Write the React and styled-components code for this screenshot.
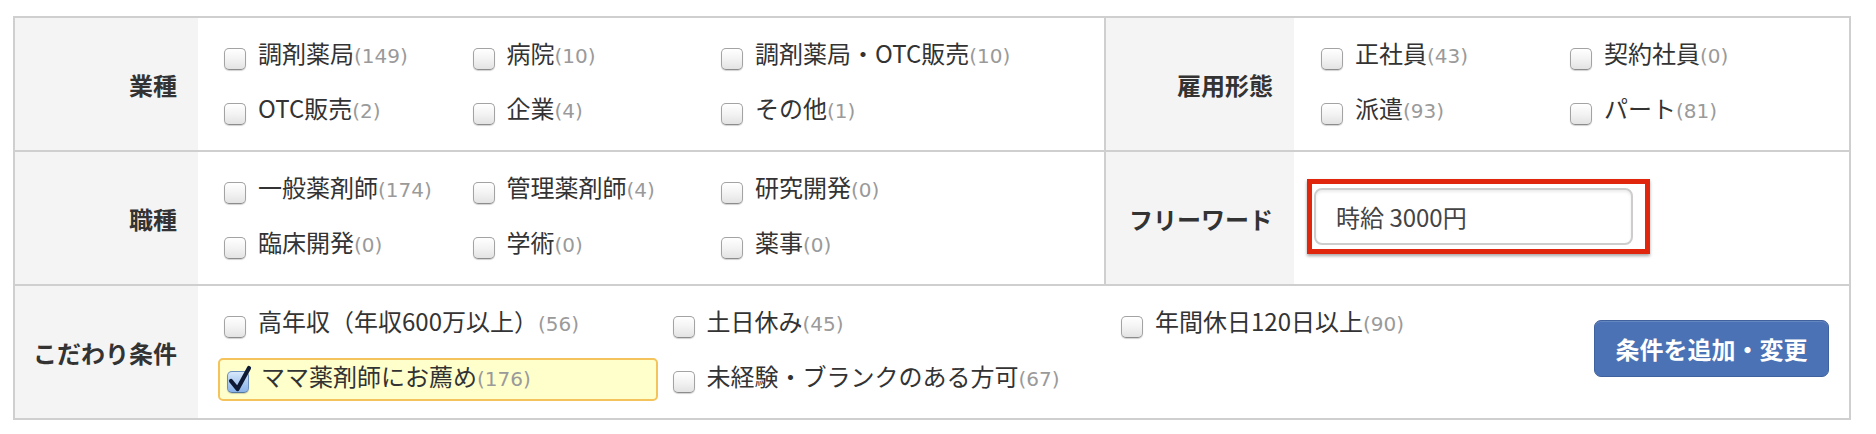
import React from "react";
import styled, { createGlobalStyle } from "styled-components";

const GlobalStyle = createGlobalStyle`
  body {
    margin: 0;
    background: #fff;
    color: #333;
    font-family: "Noto Sans CJK JP", "Liberation Sans", sans-serif;
  }
`;

const industry = [
  ["調剤薬局", 149],
  ["病院", 10],
  ["調剤薬局・OTC販売", 10],
  ["OTC販売", 2],
  ["企業", 4],
  ["その他", 1],
];

const employment = [
  ["正社員", 43],
  ["契約社員", 0],
  ["派遣", 93],
  ["パート", 81],
];

const jobs = [
  ["一般薬剤師", 174],
  ["管理薬剤師", 4],
  ["研究開発", 0],
  ["臨床開発", 0],
  ["学術", 0],
  ["薬事", 0],
];

const prefs = [
  ["高年収（年収600万以上）", 56],
  ["土日休み", 45],
  ["年間休日120日以上", 90],
  ["ママ薬剤師にお薦め", 176, true],
  ["未経験・ブランクのある方可", 67],
];

const Check = ({ label, count, checked }) => (
  <Option $on={checked}>
    <Box $on={checked}>
      {checked && (
        <Tick viewBox="0 0 24 28">
          <path d="M3 16 L9.5 24 L21 3" fill="none" stroke="#0e1a33" strokeWidth="4.2" strokeLinecap="round" strokeLinejoin="round" />
        </Tick>
      )}
    </Box>
    <Text>
      {label}
      <Count>({count})</Count>
    </Text>
  </Option>
);

const OptionGrid = ({ items, cols, colW }) => (
  <Options $cols={cols} $colW={colW}>
    {items.map(([label, count, checked]) => (
      <Check key={label} label={label} count={count} checked={checked} />
    ))}
  </Options>
);

export default function App() {
  return (
    <Page>
      <GlobalStyle />
      <Table>
        <Row>
          <Head $w={183}>業種</Head>
          <Cell $w={908} $divider $pl={26}>
            <OptionGrid items={industry} cols={3} colW={248.5} />
          </Cell>
          <Head $w={188}>雇用形態</Head>
          <Cell $grow $pl={27}>
            <OptionGrid items={employment} cols={2} colW={249} />
          </Cell>
        </Row>
        <Row>
          <Head $w={183}>職種</Head>
          <Cell $w={908} $divider $pl={26}>
            <OptionGrid items={jobs} cols={3} colW={248.5} />
          </Cell>
          <Head $w={188}>フリーワード</Head>
          <Cell $grow $pl={13} $center>
            <Marker>
              <Keyword defaultValue="時給 3000円" />
            </Marker>
          </Cell>
        </Row>
        <Row>
          <Head $w={183}>こだわり条件</Head>
          <Cell $grow $pl={26}>
            <OptionGrid items={prefs} cols={3} colW={448.5} />
            <Submit>条件を追加・変更</Submit>
          </Cell>
        </Row>
      </Table>
    </Page>
  );
}

const Page = styled.div`
  padding: 16px 0 0 13px;
`;

const Table = styled.div`
  width: 1838px;
  box-sizing: border-box;
  border: 2px solid #cfcfcf;
`;

const Row = styled.div`
  display: flex;
  height: 132px;
  & + & {
    border-top: 2px solid #cfcfcf;
  }
`;

const Head = styled.div`
  flex: none;
  width: ${(p) => p.$w}px;
  box-sizing: border-box;
  padding-right: 21px;
  display: flex;
  align-items: center;
  justify-content: flex-end;
  background: #f4f4f4;
  font-size: 24px;
  font-weight: 700;
  color: #333;
  white-space: nowrap;
`;

const Cell = styled.div`
  flex: ${(p) => (p.$grow ? "1 1 auto" : "none")};
  width: ${(p) => (p.$w ? `${p.$w}px` : "auto")};
  box-sizing: border-box;
  padding-left: ${(p) => p.$pl}px;
  display: flex;
  align-items: ${(p) => (p.$center ? "center" : "flex-start")};
  border-right: ${(p) => (p.$divider ? "2px solid #cfcfcf" : "none")};
`;

const Options = styled.div`
  display: grid;
  grid-template-columns: repeat(${(p) => p.$cols}, ${(p) => p.$colW}px);
  row-gap: 21px;
  padding-top: 20px;
  align-content: start;
`;

const Option = styled.label`
  display: flex;
  align-items: flex-start;
  height: 34px;
  line-height: 34px;
  font-size: 24px;
  color: #333;
  white-space: nowrap;
  ${(p) =>
    p.$on &&
    `
    margin: -3px 15px -6px -6px;
    padding: 1px 0 4px 7px;
    background: #ffffcc;
    border: 2px solid #f5c35c;
    border-radius: 5px;
  `}
`;

const Box = styled.span`
  position: relative;
  flex: none;
  width: 20px;
  height: 20px;
  margin-top: 10px;
  margin-right: 12px;
  border: 1px solid ${(p) => (p.$on ? "#6b8fbf" : "#a3a3a3")};
  border-bottom-color: ${(p) => (p.$on ? "#56799f" : "#8c8c8c")};
  border-radius: 5px;
  background: ${(p) =>
    p.$on
      ? "linear-gradient(#d8e8fb, #a9c9f0 55%, #8ab4ea)"
      : "linear-gradient(#ffffff, #f3f3f3 50%, #e3e3e3)"};
  box-shadow: 0 1px 1px rgba(0, 0, 0, 0.18);
`;

const Tick = styled.svg`
  position: absolute;
  left: 0;
  top: -7px;
  width: 24px;
  height: 28px;
`;

const Text = styled.span`
  display: inline-block;
  margin-top: -2px;
`;

const Count = styled.span`
  font-family: "DejaVu Sans", "Liberation Sans", sans-serif;
  font-size: 20px;
  color: #9a9a9a;
`;

const Marker = styled.div`
  display: inline-flex;
  margin-bottom: 3px;
  padding: 4px 12px 4px 2px;
  border: 5px solid #e0260c;
  box-shadow: 0 2px 3px rgba(0, 0, 0, 0.35);
`;

const Keyword = styled.input`
  width: 319px;
  height: 57px;
  box-sizing: border-box;
  padding: 0 20px;
  border: 2px solid #cdcdcd;
  border-radius: 8px;
  box-shadow: inset 0 2px 3px rgba(0, 0, 0, 0.08);
  font-family: "Noto Sans CJK JP", "Liberation Sans", sans-serif;
  font-size: 24px;
  color: #444;
  outline: none;
`;

const Submit = styled.button`
  align-self: center;
  margin: 0 20px 7px auto;
  width: 235px;
  height: 57px;
  border: 1px solid #3f629e;
  border-radius: 7px;
  background: #4b72b4;
  box-shadow: inset 0 1px 0 rgba(255, 255, 255, 0.15);
  color: #fff;
  font-family: "Noto Sans CJK JP", "Liberation Sans", sans-serif;
  font-size: 24px;
  font-weight: 700;
  cursor: pointer;
`;
